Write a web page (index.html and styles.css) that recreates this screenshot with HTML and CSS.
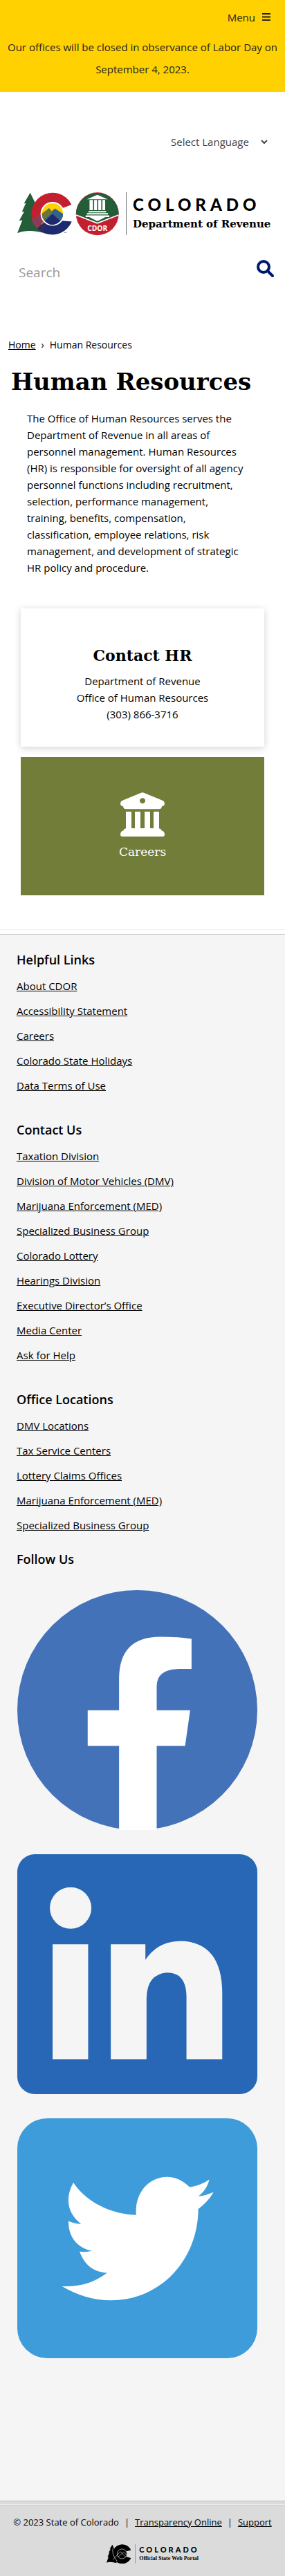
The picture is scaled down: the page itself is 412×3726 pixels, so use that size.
FILE: index.html
```html
<!DOCTYPE html>
<html lang="en">
<head>
<meta charset="utf-8">
<meta name="viewport" content="width=device-width, initial-scale=1">
<title>Human Resources | Department of Revenue</title>
<link rel="stylesheet" href="styles.css">
</head>
<body>
<div class="alert-bar">
  <button class="menu-button" type="button">Menu
    <svg width="12" height="12" viewBox="0 0 12 12" aria-hidden="true"><path d="M0 1h12M0 5.500h12M0 10h12" stroke="currentColor" stroke-width="2"/></svg>
  </button>
  <p class="alert-text">Our offices will be closed in observance of Labor Day on September 4, 2023.</p>
</div>

<header class="site-header">
  <div class="language">
    <select class="language-select" aria-label="Select Language"><option>Select Language</option></select>
    <svg class="language-arrow" width="10" height="7" viewBox="0 0 10 7" aria-hidden="true"><path d="M1 1l4 4 4-4" fill="none" stroke="#444" stroke-width="2"/></svg>
  </div>

  <a class="brand" href="#">
    <svg class="brand-mark" viewBox="0 0 442 188" role="img" aria-label="CDOR">
      <path d="M56 2L82 55 73 54 90 88 81 87 104 140 126 180Q50 158 0 178L22 122 8 124 30 84 20 85 37 48 29 49Z" fill="#245d38"/>
      <path d="M153 94L236 54A92 92 0 1 0 85 156Z" fill="#c3202f"/>
      <path d="M153 94L88 159A92 92 0 0 0 237 127L195 122Z" fill="#1d2a6b"/>
      <path d="M102 94L61 118Q70 142 88 159L116 124Z" fill="#8d3a55"/>
      <path d="M88 159L119 126 132 138 108 175Z" fill="#30285f"/>
      <path d="M242 53L194 70 192 124 242 128Z" fill="#fff"/>
      <circle cx="153" cy="94" r="52" fill="#fff"/>
      <circle cx="153" cy="94" r="46" fill="#ffd100"/>
      <path d="M107 94L138 70 150 83 164 71 199 95A46 46 0 0 1 107 94Z" fill="#35618f"/>
      <path d="M107 94L138 70 154 88 115 120Q108 108 107 94Z" fill="#6d7634"/>
      <path d="M120 126L153 95 187 125Q153 158 120 126Z" fill="#1d2a6b"/>
      <text class="mark-tm" x="203" y="184">™</text>
      <circle cx="348" cy="94" r="93" fill="#c3202f"/>
      <path d="M255 96A93 93 0 0 1 441 96L348 136Z" fill="#245d38"/>
      <path d="M256 99L348 135 440 99" fill="none" stroke="#fff" stroke-width="5"/>
      <path d="M348 11L393 31H303ZM314 34h15v44h-15zM334 34h13v44h-13zM352 34h13v44h-13zM370 34h12v44h-12zM309 82h77v6h-77zM303 91h91v6h-91zM297 101h103v7h-17L348 126 313 108h-16z" fill="#fff"/>
      <text class="mark-name" x="348" y="168">CDOR</text>
    </svg>
    <span class="brand-words">
      <span class="brand-state">COLORADO</span>
      <span class="brand-dept">Department of Revenue</span>
    </span>
  </a>

  <form class="search">
    <input class="search-input" type="search" placeholder="Search" aria-label="Search">
    <button class="search-button" type="button" aria-label="Submit search">
      <svg width="26" height="26" viewBox="0 0 26 26" aria-hidden="true"><circle cx="10" cy="10" r="8" fill="none" stroke="#001970" stroke-width="4"/><path d="M16 16l7 7" stroke="#001970" stroke-width="4" stroke-linecap="round"/></svg>
    </button>
  </form>
</header>

<main>
  <nav class="breadcrumb" aria-label="Breadcrumb"><a href="#">Home</a><span>›</span><span>Human Resources</span></nav>
  <h1 class="page-title">Human Resources</h1>
  <p class="intro">The Office of Human Resources serves the Department of Revenue in all areas of personnel management. Human Resources (HR) is responsible for oversight of all agency personnel functions including recruitment, selection, performance management, training, benefits, compensation, classification, employee relations, risk management, and development of strategic HR policy and procedure.</p>
  <div class="tiles">
    <section class="tile contact-tile">
      <h2 class="tile-title">Contact HR</h2>
      <p class="tile-text">Department of Revenue<br>Office of Human Resources<br>(303) 866-3716</p>
    </section>
    <a class="tile careers-tile" href="#">
      <svg width="64" height="64" viewBox="0 0 192 192" aria-hidden="true"><path fill="#fff" fill-rule="evenodd" d="M90 2Q96-1 102 2L184 36Q192 40 192 50 191 60 180 61 179 73 168 73H24Q13 73 12 61 1 60 0 50 0 40 8 36ZM96 25a12 12 0 1 0 .1 0ZM24 84h24v72h15V84h24v72h18V84h24v72h15V84h24v73q9 1 10 8 14 5 14 18 0 9-9 9H9q-9 0-9-9 0-13 14-18 1-7 10-8z"/></svg>
      <span class="careers-label">Careers</span>
    </a>
  </div>
</main>

<footer>
  <div class="footer-main">
    <section class="link-group">
      <h2 class="footer-title">Helpful Links</h2>
      <ul class="footer-links">
        <li><a href="#">About CDOR</a></li>
        <li><a href="#">Accessibility Statement</a></li>
        <li><a href="#">Careers</a></li>
        <li><a href="#">Colorado State Holidays</a></li>
        <li><a href="#">Data Terms of Use</a></li>
      </ul>
    </section>
    <section class="link-group">
      <h2 class="footer-title">Contact Us</h2>
      <ul class="footer-links">
        <li><a href="#">Taxation Division</a></li>
        <li><a href="#">Division of Motor Vehicles (DMV)</a></li>
        <li><a href="#">Marijuana Enforcement (MED)</a></li>
        <li><a href="#">Specialized Business Group</a></li>
        <li><a href="#">Colorado Lottery</a></li>
        <li><a href="#">Hearings Division</a></li>
        <li><a href="#">Executive Director’s Office</a></li>
        <li><a href="#">Media Center</a></li>
        <li><a href="#">Ask for Help</a></li>
      </ul>
    </section>
    <section class="link-group">
      <h2 class="footer-title">Office Locations</h2>
      <ul class="footer-links">
        <li><a href="#">DMV Locations</a></li>
        <li><a href="#">Tax Service Centers</a></li>
        <li><a href="#">Lottery Claims Offices</a></li>
        <li><a href="#">Marijuana Enforcement (MED)</a></li>
        <li><a href="#">Specialized Business Group</a></li>
      </ul>
    </section>
    <section class="follow">
      <h2 class="footer-title">Follow Us</h2>
      <div class="social">
        <a href="#" aria-label="Facebook"><svg viewBox="0 0 1040 1040"><circle cx="520" cy="520" r="520" fill="#4472b8"/><path d="M441 1040V675H305V521H441V380Q443 202 620 202 690 202 755 211V342H700Q604 342 604 418V521H749L727 675H604V1040Z" fill="#fff"/></svg></a>
        <a href="#" aria-label="LinkedIn"><svg viewBox="0 0 1040 1040"><rect width="1040" height="1040" rx="76" fill="#2867b5"/><circle cx="231" cy="233" r="90" fill="#f5f5f5"/><path d="M153 390H307V889H153ZM405 390H555V458Q608 376 712 376 887 384 888 602V889H733V620Q733 513 648 513 562 520 560 624V889H405Z" fill="#f5f5f5"/></svg></a>
        <a href="#" aria-label="Twitter"><svg viewBox="0 0 1040 1040"><rect width="1040" height="1040" rx="130" fill="#3e9cda"/><path d="M243 279C300 365 410 417 515 419 507 330 565 254 650 254 685 254 717 269 747 298 780 293 807 282 832 265 824 299 806 321 784 338 808 337 829 328 850 320 833 351 812 371 784 393 784 606 626 789 407 789 330 789 258 766 194 728 275 731 333 712 389 670 326 667 289 631 270 578 290 580 307 579 323 575 257 560 221 512 222 446 239 453 258 458 276 458 216 412 206 344 243 279Z" fill="#fff"/></svg></a>
      </div>
    </section>
  </div>
  <div class="footer-bottom">
    <div class="legal">
      <span>© 2023 State of Colorado</span><span>|</span><a href="#">Transparency Online</a><span>|</span><a href="#">Support</a>
    </div>
    <a class="portal" href="#">
      <svg class="portal-mark" viewBox="0 0 108 84" aria-hidden="true"><path d="M25 2L35 22 31 40 44 82Q16 74 0 80L9 55 4 56 13 36 9 37 18 20 14 21Z"/><path d="M106 26A42 42 0 1 0 106 60L84 54A20 20 0 1 1 84 31Z"/><circle cx="67" cy="42" r="22"/><g fill="none" stroke="#dbdbdb" stroke-width="2"><circle cx="67" cy="42" r="21"/><path d="M28 67L60 32 68 41 74 34 88 47M48 57L67 40 84 56M29 14Q19 40 46 74"/></g></svg>
      <span class="portal-words"><span class="portal-state">COLORADO</span><span class="portal-name">Official State Web Portal</span></span>
    </a>
  </div>
</footer>
</body>
</html>
```
FILE: styles.css
```css
* { box-sizing: border-box; }
body {
  margin: 0;
  background: #fff;
  color: #000;
  font-family: "Open Sans", "Liberation Sans", sans-serif;
  font-size: 15px;
  line-height: 24px;
}
h1, h2, p, ul { margin: 0; padding: 0; }
h1, .tile-title, .brand-dept, .careers-label { font-family: "DejaVu Serif", serif; }
svg { display: block; }
a { color: inherit; }
button, input, select { font: inherit; color: inherit; border: 0; background: none; padding: 0; border-radius: 0; }

.alert-bar { background: #ffd100; padding: 13px 0 17px; }
.menu-button { display: flex; align-items: center; gap: 10px; margin: 0 21px 15px auto; line-height: 24px; color: #222; }
.alert-text { text-align: center; line-height: 32px; color: #222; }

.site-header { padding: 60px 15px 0 25px; }
.language { position: relative; width: 150px; margin-left: auto; padding-right: 10px; }
.language-select { appearance: none; display: block; width: 100%; height: 24px; color: #444; }
.language-arrow { position: absolute; right: 10px; top: 9px; pointer-events: none; }
.brand { display: flex; align-items: center; gap: 10px; margin-top: 61px; text-decoration: none; }
.brand-mark { width: 147px; flex: none; }
.mark-tm { font: 14px Lato, sans-serif; }
.mark-name { font: bold 31px "Open Sans", sans-serif; fill: #fff; text-anchor: middle; }
.brand-words { display: flex; flex-direction: column; gap: 4px; padding: 5px 0 4px 9px; border-left: 1px solid #777; white-space: nowrap; }
.brand-state { font-family: Lato, sans-serif; font-size: 24px; font-weight: 900; line-height: 25px; letter-spacing: 6px; }
.brand-dept { font-size: 15px; font-weight: bold; line-height: 24px; }
.search { display: flex; justify-content: space-between; margin-top: 35px; }
.search-input { flex: 1; min-width: 0; height: 36px; padding-left: 2px; font-size: 19px; outline-color: #001970; }
.search-input::placeholder { color: #999; opacity: 1; }
.search-button { height: 26px; }

.breadcrumb { display: flex; gap: 8px; padding: 0 12px; margin-top: 75px; font-size: 14px; }
.page-title { margin: 16px 16px 0; font-size: 34px; line-height: 50px; }
.intro { margin: 16px 55px 0 39px; }
.tiles { display: flex; flex-direction: column; gap: 15px; padding: 47px 30px 49px; border-bottom: 1px solid #f2f2f2; }
.tile { display: flex; flex-direction: column; align-items: center; justify-content: center; min-height: 200px; text-align: center; }
.contact-tile { padding-top: 18px; gap: 10px; box-shadow: 0 2px 10px rgba(0, 0, 0, 0.18); }
.tile-title { font-size: 22px; line-height: 30px; }
.careers-tile { gap: 10px; background: #727d3a; color: #fff; text-decoration: none; }
.careers-label { font-size: 17px; }

.footer-main { margin-top: 6px; border-top: 1px solid #ccc; background: #f5f5f5; padding: 24px 40px 206px 24px; }
.footer-title { font-size: 18px; font-weight: 600; line-height: 24px; }
.footer-links { list-style: none; padding-top: 8px; }
.footer-links li { line-height: 36px; }
.link-group { padding-bottom: 34px; }
.link-group:nth-child(3) { padding-bottom: 19px; }
.social { display: flex; flex-direction: column; gap: 35px; padding: 33px 0 0 1px; }

.footer-bottom { border-top: 1px solid #bbb; background: #dbdbdb; padding-bottom: 19px; }
.legal { display: flex; justify-content: center; gap: 8px; margin-top: 4px; padding: 13px 8px 20px; border-top: 1px solid #eee; box-shadow: inset 0 1px #ccc; font-size: 13px; white-space: nowrap; }
.portal { display: flex; width: max-content; margin: 0 auto; padding-left: 30px; gap: 5px; text-decoration: none; }
.portal-mark { width: 36px; height: 28px; }
.portal-words { display: flex; flex-direction: column; padding-left: 5px; border-left: 1px solid #999; white-space: nowrap; }
.portal-state { font-family: Lato, sans-serif; font-size: 11px; font-weight: 900; line-height: 15px; letter-spacing: 3px; }
.portal-name { font: bold 8px/12px "Liberation Serif", serif; }
```
